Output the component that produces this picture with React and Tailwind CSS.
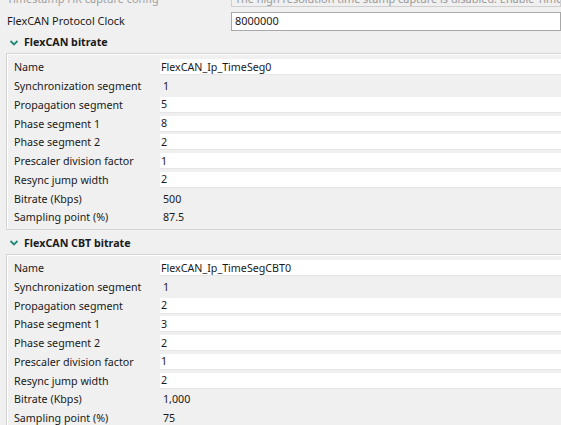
import React from "react";

const font = { fontFamily: '"Noto Sans", "Open Sans", sans-serif' };

const groups = [
  {
    title: "FlexCAN bitrate",
    rows: [
      { label: "Name", value: "FlexCAN_Ip_TimeSeg0", edit: true },
      { label: "Synchronization segment", value: "1" },
      { label: "Propagation segment", value: "5", edit: true },
      { label: "Phase segment 1", value: "8", edit: true },
      { label: "Phase segment 2", value: "2", edit: true },
      { label: "Prescaler division factor", value: "1", edit: true },
      { label: "Resync jump width", value: "2", edit: true },
      { label: "Bitrate (Kbps)", value: "500" },
      { label: "Sampling point (%)", value: "87.5" },
    ],
  },
  {
    title: "FlexCAN CBT bitrate",
    rows: [
      { label: "Name", value: "FlexCAN_Ip_TimeSegCBT0", edit: true },
      { label: "Synchronization segment", value: "1" },
      { label: "Propagation segment", value: "2", edit: true },
      { label: "Phase segment 1", value: "3", edit: true },
      { label: "Phase segment 2", value: "2", edit: true },
      { label: "Prescaler division factor", value: "1", edit: true },
      { label: "Resync jump width", value: "2", edit: true },
      { label: "Bitrate (Kbps)", value: "1,000" },
      { label: "Sampling point (%)", value: "75" },
    ],
  },
];

const Chevron = () => (
  <svg width="10" height="8" viewBox="0 0 10 8" className="shrink-0">
    <path d="M1.5 2 L5 5.5 L8.5 2" fill="none" stroke="#1e8a78" strokeWidth="1.8" />
  </svg>
);

const Group = ({ group }) => (
  <>
    <div className="flex items-center gap-[5px] pl-[9px] h-[21px]">
      <Chevron />
      <span className="text-[10.7px] font-bold text-[#1a1a1a]">{group.title}</span>
    </div>
    <div className="ml-[6px] mr-[-10px] border border-[#d4d4d4] shadow-[inset_1px_1px_0_#ffffff] pt-[4px] pb-[2px]">
      {group.rows.map((row, i) => (
        <div key={i} className="flex items-center h-[18.75px]">
          <div className="w-[153px] pl-[7px] text-[10.7px] text-[#1a1a1a] whitespace-nowrap">
            {row.label}
          </div>
          {row.edit ? (
            <div className="flex-1 h-[16px] bg-white flex items-center pl-[1px] text-[10.7px] text-[#1a1a1a] border-b border-[#e6e6e6]">
              {row.value}
            </div>
          ) : (
            <div className="flex-1 pl-[3px] text-[10.7px] text-[#1a1a1a]">{row.value}</div>
          )}
        </div>
      ))}
    </div>
  </>
);

export default function App() {
  return (
    <div className="w-[561px] h-[425px] overflow-hidden bg-[#f0f0f0]" style={font}>
      <div className="mt-[-9px]">
        <div className="flex items-center h-[16px] overflow-hidden">
          <div className="w-[231px] pl-[7px] text-[10.9px] text-[#a0a0a0] whitespace-nowrap">
            Timestamp HR capture config
          </div>
          <div className="flex-1 h-[16px] border border-[#cfcfcf] bg-[#f0f0f0] pl-[3px] flex items-center text-[10.9px] text-[#9a9a9a] whitespace-nowrap overflow-hidden">
            The high resolution time stamp capture is disabled. Enable Timer
          </div>
        </div>
        <div className="flex items-center h-[19px] mt-[5px]">
          <div className="w-[231px] pl-[7px] text-[10.9px] text-[#1a1a1a] whitespace-nowrap">
            FlexCAN Protocol Clock
          </div>
          <div className="flex-1 h-[19px] border border-[#a8a8a8] bg-white pl-[3px] flex items-center text-[10.9px] text-[#1a1a1a]">
            8000000
          </div>
        </div>
      </div>
      <div className="mt-[1px]">
        <Group group={groups[0]} />
      </div>
      <div className="mt-[3px]">
        <Group group={groups[1]} />
      </div>
    </div>
  );
}
